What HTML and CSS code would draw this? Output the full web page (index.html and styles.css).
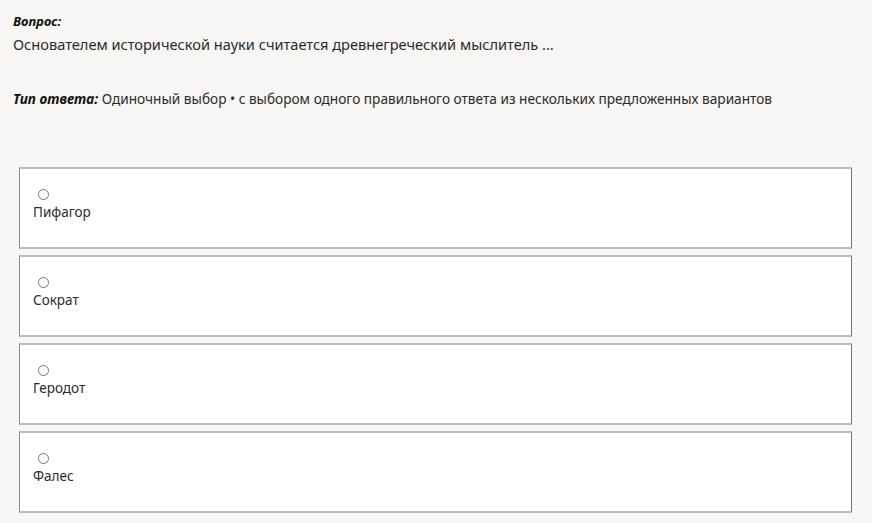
FILE: index.html
```html
<!DOCTYPE html>
<html lang="ru">
<head>
    <meta charset="UTF-8">
    <meta name="viewport" content="width=device-width, initial-scale=1.0">
    <title>Вопрос</title>
    <link rel="stylesheet" href="styles.css">
</head>
<body>

<div class="question">
    <div class="label">Вопрос:</div>
    <div class="text">Основателем исторической науки считается древнегреческий мыслитель ...</div>
</div>

<div class="answer-type">
    <span class="label">Тип ответа:</span> Одиночный выбор • с выбором одного правильного ответа из нескольких предложенных вариантов
</div>

<div class="options">
    <label class="option">
        <input type="radio" name="answer" class="radio">
        <span class="option-text">Пифагор</span>
    </label>
    <label class="option">
        <input type="radio" name="answer" class="radio">
        <span class="option-text">Сократ</span>
    </label>
    <label class="option">
        <input type="radio" name="answer" class="radio">
        <span class="option-text">Геродот</span>
    </label>
    <label class="option">
        <input type="radio" name="answer" class="radio">
        <span class="option-text">Фалес</span>
    </label>
</div>

</body>
</html>
```

FILE: styles.css
```css
body {
    font-family: "Noto Sans", "Open Sans", sans-serif;
    background-color: #f7f6f4;
    color: #2b2b2b;
    margin: 0;
    padding: 12px 13px 0 13px;
}
.label {
    font-weight: bold;
    font-style: italic;
    font-size: 13px;
    color: #111;
}
.question .text {
    font-size: 14.6px;
    margin-top: 4px;
}
.answer-type {
    font-size: 13.65px;
    margin-top: 35px;
}
.answer-type .label {
    font-size: 13.65px;
}
.options {
    display: flex;
    flex-direction: column;
    gap: 6px;
    margin-top: 59px;
    padding: 0 7px 0 6px;
}
.option {
    display: flex;
    flex-direction: column;
    align-items: flex-start;
    height: 78px;
    background-color: #fff;
    border-top: 2px solid #bdbdbd;
    border-bottom: 2px solid #bdbdbd;
    border-left: 1px solid #8a8a8a;
    border-right: 1px solid #777;
    padding: 0 13px;
    cursor: pointer;
}
.radio {
    width: 11px;
    height: 11px;
    margin: 20px 0 0 5px;
}
.option-text {
    font-size: 13.5px;
    margin-top: 3px;
}
```
